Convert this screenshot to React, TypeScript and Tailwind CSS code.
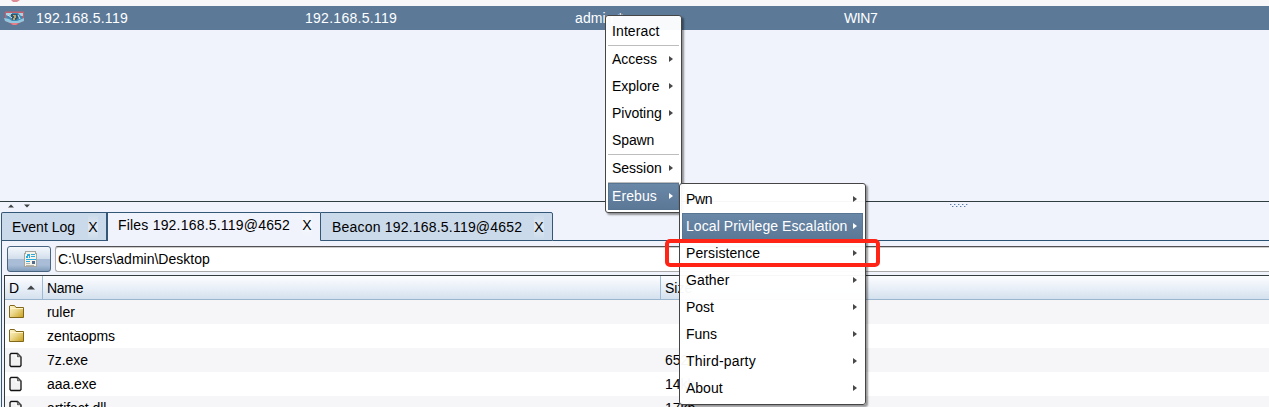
import React from "react";

function Arrow({ light = false }: { light?: boolean }) {
  return (
    <svg width="4" height="6" viewBox="0 0 4 6" className="shrink-0">
      <path d="M0 0L4 3L0 6Z" fill={light ? "#ffffff" : "#484848"} />
    </svg>
  );
}

type Entry = { label: string; arrow?: boolean; active?: boolean; line?: boolean; track?: string };

const mainMenu: Entry[] = [
  { label: "Interact", line: true, track: "tracking-[0.1px]" },
  { label: "Access", arrow: true },
  { label: "Explore", arrow: true },
  { label: "Pivoting", arrow: true },
  { label: "Spawn", line: true, track: "tracking-[-0.1px]" },
  { label: "Session", arrow: true, line: true },
  { label: "Erebus", arrow: true, active: true, track: "tracking-[0.1px]" },
];

const subMenu: Entry[] = [
  { label: "Pwn", arrow: true, track: "tracking-[-0.3px]" },
  { label: "Local Privilege Escalation", arrow: true, active: true, track: "tracking-[0.07px]" },
  { label: "Persistence", arrow: true, track: "tracking-[0.1px]" },
  { label: "Gather", arrow: true, track: "tracking-[0.1px]" },
  { label: "Post", arrow: true },
  { label: "Funs", arrow: true },
  { label: "Third-party", arrow: true, track: "tracking-[0.2px]" },
  { label: "About", arrow: true },
];

function Menu({ items, place }: { items: Entry[]; place: string }) {
  return (
    <div
      className={`absolute rounded-[3px] border border-[#454545] bg-white/96 px-[2px] py-[2px] shadow-[2px_2px_2px_rgba(0,0,0,0.4)] ${place}`}
    >
      {items.map((m) => (
        <div key={m.label} className={m.line ? "border-b border-[#bdbdbd]" : ""}>
          <div
            className={`flex h-[27px] items-center justify-between pr-[6px] pb-[2px] pl-[4px] ${
              m.active ? "bg-gradient-to-b from-[#6a88a8] to-[#5b7796] text-white shadow-[inset_0_0_0_1px_#587594]" : ""
            }`}
          >
            <span className={m.track ?? ""}>{m.label}</span>
            {m.arrow && <Arrow light={m.active} />}
          </div>
        </div>
      ))}
    </div>
  );
}

function SessionIcon() {
  return (
    <svg width="22" height="16" viewBox="0 0 22 16">
      <path d="M1 1.5H20V11L16 12.5L13 15H8L5 12.5L1 11Z" fill="#c5606f" />
      <path d="M2.5 3H18.5V10L15 11H7L2.5 9Z" fill="#3e8bb5" />
      <path d="M2 3H8V5L4 6L2 5ZM14 3H19V6H17Z" fill="#a9d2e2" />
      <path d="M0 8L5 9L8 11H13L20 8V11L15 13H6L1 11Z" fill="#93c7df" />
      <path d="M7 4H13L15 7L12 10H9L7 8Z" fill="#34566f" />
      <path d="M9 5H12V8H11V10H9V8H10V6H9Z" fill="#b7a872" />
      <path d="M7 13H14L12 15H9Z" fill="#e58089" />
      <path d="M4 5L8 8M14 5L16 9" stroke="#d8e8ee" />
    </svg>
  );
}

function FolderIcon() {
  return (
    <svg width="16" height="16" viewBox="0 0 16 16">
      <defs>
        <linearGradient id="folder" x1="0" y1="0" x2="1" y2="1">
          <stop offset="0" stopColor="#fff7d5" />
          <stop offset="0.45" stopColor="#ecd88c" />
          <stop offset="1" stopColor="#c79d19" />
        </linearGradient>
      </defs>
      <path d="M.5 2L1 1.5H5.5L7 3.5H14.5V13.5H.5Z" fill="url(#folder)" stroke="#806719" />
      <path d="M1.5 4.5H14" stroke="#fff5c7" />
    </svg>
  );
}

function FileIcon() {
  return (
    <svg width="16" height="16" viewBox="0 0 16 16">
      <path d="M2 1.5H8.5L12 5V13.5L11 14.5H2L1 13.5V2.5Z" fill="#f1f1f1" stroke="#111" strokeWidth="1.3" />
      <path d="M8.5 1.5V5H12Z" fill="#888" stroke="#444" strokeWidth=".7" />
      <path d="M2.5 3H7V6H11" fill="none" stroke="#fff" />
    </svg>
  );
}

function NewsIcon() {
  return (
    <svg width="14" height="16" viewBox="0 0 14 16" shapeRendering="crispEdges">
      <path d="M1 0H12V2H13V16H0V2H1Z" fill="#a5a6a1" />
      <path d="M2 1H11V3H12V15H1V3H2Z" fill="#f5f3ea" />
      <path d="M3 3H6V7H5V5H4V7H2V5H3ZM7 3H11V4H7ZM7 5H11V6H7ZM2 8H12V9H2ZM2 10H6V11H2Z" fill="#2ca9dd" />
      <path d="M8 10H11V13H8Z" fill="#536c8d" />
      <path d="M2 12H6V13H2ZM2 14H10V15H2Z" fill="#b3b3a9" />
    </svg>
  );
}

const files = [
  { name: "ruler", size: "", folder: true },
  { name: "zentaopms", size: "", folder: true },
  { name: "7z.exe", size: "652kb", folder: false },
  { name: "aaa.exe", size: "14kb", folder: false },
  { name: "artifact.dll", size: "17kb", folder: false },
];

function Close() {
  return <span className="h-[24px] w-[10px] bg-gradient-to-b from-transparent via-white/40 to-transparent text-center">X</span>;
}

export default function App() {
  return (
    <div className="relative flex h-[407px] w-[1269px] flex-col overflow-hidden bg-[#f0f3fb] font-['Liberation_Sans',sans-serif] text-[14px] leading-[24px] whitespace-pre text-black">
      <div className="h-[6px] shrink-0 bg-[#f7f7f9] pl-[11px]">
        <svg width="9" height="3" viewBox="0 0 9 3" className="block"><path d="M0 0H9L6 2H2Z" fill="#dc8b94" /></svg>
      </div>
      <div className="flex h-[24px] shrink-0 items-center bg-[#5c7a98] tracking-[0.27px] text-white">
        <div className="flex w-[36px] items-center pl-[4px]"><SessionIcon /></div>
        <span className="w-[269px]">192.168.5.119</span>
        <span className="w-[270px]">192.168.5.119</span>
        <span className="w-[269px] tracking-[0.1px]">admin *</span>
        <span className="tracking-[-0.4px]">WIN7</span>
      </div>
      <div className="h-[171px] shrink-0" />
      <div className="flex h-[11px] shrink-0 items-start border-t border-[#303c3e] pt-[2px]">
        <svg width="32" height="4" viewBox="0 0 32 4" className="ml-[8px] shrink-0">
          <path d="M0 3.5L3 .5L6 3.5ZM16 .5H22L19 3.5Z" fill="#3d4142" />
        </svg>
        <svg width="19" height="3" viewBox="0 0 19 3" className="ml-[910px]" shapeRendering="crispEdges">
          <path d="M0 0H1V1H0ZM4 0H5V1H4ZM8 0H9V1H8ZM12 0H13V1H12ZM16 0H17V1H16ZM2 2H3V3H2ZM6 2H7V3H6ZM10 2H11V3H10ZM14 2H15V3H14Z" fill="#587baa" />
          <path d="M1 0H2V1H1ZM5 0H6V1H5ZM9 0H10V1H9ZM13 0H14V1H13ZM17 0H18V1H17ZM3 2H4V3H3ZM7 2H8V3H7ZM11 2H12V3H11ZM15 2H16V3H15Z" fill="#b5c8df" />
        </svg>
      </div>
      <div className="flex h-[29px] shrink-0 pl-px">
        <div className="flex w-[107px] justify-between rounded-tl-[2px] border border-r-2 border-[#345777] bg-[#cbdaea] pt-[2px] pr-[8px] pl-[10px]">
          <span>Event Log</span><Close />
        </div>
        <div className="flex w-[212px] justify-between border-t border-[#345777] pr-[8px] pl-[10px]">
          <span className="tracking-[0.2px]">Files 192.168.5.119@4652</span><Close />
        </div>
        <div className="flex w-[233px] justify-between rounded-tr-[2px] border border-[#345777] bg-[#cbdaea] pt-[2px] pr-[8px] pl-[11px]">
          <span className="tracking-[0.2px]">Beacon 192.168.5.119@4652</span><Close />
        </div>
        <div className="flex-1 border-b border-[#2c5273]" />
      </div>
      <div className="ml-px flex h-[166px] shrink-0 flex-col border-l border-[#345777] pl-[2px]">
        <div className="flex h-[34px] shrink-0 pt-[5px] pl-[3px]">
          <div className="flex h-[26px] w-[44px] items-center justify-center rounded-[3px] border border-[#496582] bg-linear-[180deg,#f5f8fc_0%,#d3dfed_48%,#a9bdd6_52%,#a9bdd8_75%,#829ebb_100%] pl-[3px]">
            <NewsIcon />
          </div>
          <div className="ml-[4px] h-[26px] flex-1 rounded-l-[3px] border border-r-0 border-[#a9a9a9] border-t-[#535053] bg-white pl-[2px] leading-[25px] shadow-[inset_0_1px_0_#ccc]">C:\Users\admin\Desktop</div>
        </div>
        <div className="flex min-h-0 flex-1 flex-col border-t border-l border-[#333b3e] bg-white">
          <div className="flex h-[24px] shrink-0 border-b border-[#9bb5cf] bg-gradient-to-b from-[#fcfdff] via-[#eaf0f8] to-[#d4e1ee]">
            <div className="flex w-[38px] items-center border-r border-[#9cbad5] pl-[4px]">
              D
              <svg width="8" height="5" viewBox="0 0 8 5" className="ml-[8px]"><path d="M0 4.5L4 .5L8 4.5Z" fill="#404448" /></svg>
            </div>
            <div className="w-[618px] border-r border-[#9cbad5] pl-[4px] tracking-[-0.3px]">Name</div>
            <div className="pl-[4px]">Size</div>
          </div>
          {files.map((f) => (
            <div key={f.name} className="flex h-[24px] shrink-0 items-center odd:bg-white even:bg-[#f6f6f8]">
              <div className="w-[42px] pl-[4px]">{f.folder ? <FolderIcon /> : <FileIcon />}</div>
              <span className="w-[618px] tracking-[-0.05px]">{f.name}</span>
              <span>{f.size}</span>
            </div>
          ))}
        </div>
      </div>
      <Menu items={mainMenu} place="left-[605px] top-[15px] w-[77px]" />
      <Menu items={subMenu} place="left-[679px] top-[183px] w-[187px]" />
      <div className="absolute top-[239px] left-[665px] h-[28px] w-[215px] rounded-[5px] border-4 border-[#ff2416]" />
    </div>
  );
}
